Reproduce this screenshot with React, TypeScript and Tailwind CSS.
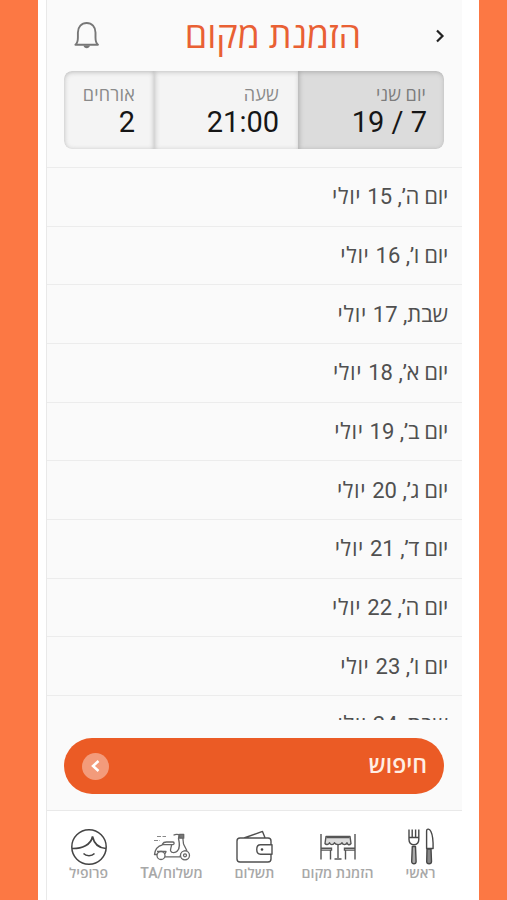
import type { ReactNode } from "react";

const days = [
  { weekday: "יום ה’,", date: " 15", month: " יולי" },
  { weekday: "יום ו’,", date: " 16", month: " יולי" },
  { weekday: "שבת,", date: " 17", month: " יולי" },
  { weekday: "יום א’,", date: " 18", month: " יולי" },
  { weekday: "יום ב’,", date: " 19", month: " יולי" },
  { weekday: "יום ג’,", date: " 20", month: " יולי" },
  { weekday: "יום ד’,", date: " 21", month: " יולי" },
  { weekday: "יום ה’,", date: " 22", month: " יולי" },
  { weekday: "יום ו’,", date: " 23", month: " יולי" },
  { weekday: "שבת,", date: " 24", month: " יולי" },
];

function Bell() {
  return (
    <svg width="28" height="30" viewBox="0 0 28 30" fill="none" stroke="#777" strokeWidth="1.9">
      <path d="M2.400 23.800c2-1.500 2.500-4 2.500-7.300V11.500C4.900 6 8.500 2 13.700 2s8.800 4 8.800 9.500v5c0 3.300.5 5.800 2.500 7.300z" strokeLinejoin="round" />
      <path d="M10.500 24.500c.5 3.600 5.900 3.600 6.400 0z" fill="#777" stroke="none" />
    </svg>
  );
}

function Cutlery() {
  return (
    <svg width="30" height="38" viewBox="0 0 30 38" fill="none" stroke="#484848" strokeWidth="1.4" strokeLinejoin="round">
      <path d="M3 1.500v10c0 3.200 1.500 5 4.900 5.300 3.400-.3 4.900-2.100 4.900-5.300v-10M6.200 1.500v7.500M9.600 1.500v7.500M3 9.500h9.800" />
      <path d="M6.300 18.500h3.200l.6 15c0 3-4.400 3-4.400 0z" fill="#aaa" />
      <path d="M20.600 20.500V3c.1-3 3-2 4.300.5 1.800 3.500 2.400 8 2.200 17z" />
      <path d="M21 21h4l.5 12.500c0 3-4.800 3-4.800 0z" fill="#888" />
    </svg>
  );
}

function DiningTable() {
  return (
    <svg width="36" height="26" viewBox="0 0 36 26" fill="none" stroke="#555" strokeWidth="1.4">
      <path d="M1 0v25.500M1 14.200h10.500v1.900H1M10.500 16v9.500M35 0v25.500M35 14.200H24.500v1.900H35M25.500 16v9.500M18 10v14M14.500 25h7" />
      <path d="M6 2.500h24l1 7c-1.500 2-3.500 1.500-4-.8-1 2.500-4.200 2.500-5 0-1 2.500-6.500 2.500-7.500 0-1 2.500-4.500 2.500-5 0-1 2.300-3.500 2.300-4.500.8z" fill="#dcdcdc" strokeLinejoin="round" />
      <path d="M6.500 3.500h23" strokeWidth="1.500" />
    </svg>
  );
}

function Wallet() {
  return (
    <svg width="38" height="34" viewBox="0 0 38 34" fill="none" stroke="#505050" strokeWidth="1.4" strokeLinejoin="round">
      <path d="M8 8 26.500 1.400 29 7.800M4 8h28q3 0 3 3v18q0 3-3 3H4q-3 0-3-3V11q0-3 3-3z" />
      <path d="M36 14.800H24.500c-5 0-5 9.400 0 9.400H36z" fill="white" />
      <circle cx="26" cy="19.500" r="1.300" fill="#444" stroke="none" />
    </svg>
  );
}

function Scooter() {
  return (
    <svg width="38" height="28" viewBox="0 0 38 28" fill="none" stroke="#666" strokeWidth="1.300" strokeLinejoin="round">
      <path d="M4 3.500h9M1 7.500h6" strokeWidth="1" strokeDasharray="4 1.500" stroke="#888" />
      <path d="M9.500 11c.7-1.500 2-2 4-2h6.500c1.500.2 1.500 2.300 0 2.600H9.500zM9.500 11.800C4.500 13 2 16.500 1.500 21.500h3M18.500 11.800c0 2.500-1.500 4-.8 6.200.9 2.200 4.800 2 6.600 0 3.200-3.500 2.200-8 1.200-12.500l.5-3.500h3.500l1 9 3.300 6.500c-4 .4-6 3-6.800 6.300H11.500" />
      <path d="M20.500 2.200c2-1.200 3.500-1.200 5.500-.5" />
      <path d="M26.500 1.300h4.200v3.900h-4.200z" fill="#777" />
      <path d="M4 18.500h9c-.2 1.500-1.500 2.500-2.500 2.500" />
      <circle cx="8" cy="22.500" r="4" fill="white" />
      <circle cx="32" cy="22.300" r="4.500" fill="white" />
      <circle cx="32" cy="22.300" r="1.500" />
    </svg>
  );
}

function Face() {
  return (
    <svg width="38" height="38" viewBox="0 0 38 38" fill="none" stroke="#444" strokeWidth="1.500">
      <circle cx="19" cy="19" r="17.200" />
      <path d="M2 20.500c10 .2 19-3.500 20.500-12 1.500 7 6 11.500 13.500 12" strokeWidth="1.700" />
      <path d="M13.500 25.500c2.800 3 8.200 3 11 0" />
    </svg>
  );
}

function Segment({ label, value, className, labelClass }: { label: string; value: string; className: string; labelClass: string }) {
  return (
    <div className={`flex flex-col items-end pt-[14px] ${className}`}>
      <span dir="rtl" className={`text-[18px] leading-5 ${labelClass}`}>{label}</span>
      <span dir="ltr" className="mt-[1px] text-[29px] leading-8 text-[#161616]">{value}</span>
    </div>
  );
}

function Tab({ label, children }: { label: string; children: ReactNode }) {
  return (
    <div className="flex w-[83px] flex-col items-center">
      <div className="flex h-[38px] items-center justify-center">{children}</div>
      <span dir="rtl" className="mt-[-2px] whitespace-nowrap text-[14px] font-semibold leading-[18px] text-[#a8a8a8]">{label}</span>
    </div>
  );
}

export default function App() {
  return (
    <div className="flex h-[900px] w-[507px] justify-center overflow-hidden bg-[#fc7844] pl-[10px] font-['Roboto','Open_Sans','Noto_Sans',sans-serif]">
      <div className="h-full w-[441px] bg-white pl-2 pr-[17px]">
        <div className="flex h-full w-[416px] flex-col border-l border-[#e9e9e9] bg-[#fafafa]">
          <header className="flex h-[71px] shrink-0 items-center pl-[26px] pr-[17px]">
            <Bell />
            <h1 dir="rtl" className="ml-auto mr-[74px] whitespace-nowrap text-[36px] font-[450] leading-[44px] tracking-[-0.1px] text-[#e96034]">הזמנת מקום</h1>
            <svg width="10" height="14" viewBox="0 0 10 14" fill="none" stroke="#222" strokeWidth="2.200"><path d="m2 1.500 5.500 5.500L2 12.500" /></svg>
          </header>
          <div className="ml-[17px] flex h-[78px] w-[380px] shrink-0 overflow-hidden rounded-lg">
            <Segment label="אורחים" value="2" labelClass="tracking-[0.2px] font-medium text-[#8a8a8a]" className="w-[90px] rounded-l-lg bg-[#f4f4f4] pr-[19px] shadow-[inset_0_1px_5px_#b8b8b8]" />
            <Segment label="שעה" value="21:00" labelClass="tracking-[0.2px] font-medium text-[#8a8a8a]" className="w-[144px] bg-[#f4f4f4] pr-[19px] shadow-[inset_1px_1px_5px_#c0c0c0]" />
            <Segment label="יום שני" value="19 / 7" labelClass="pr-px tracking-[0.1px] font-medium text-[#7c7c7c]" className="w-[146px] rounded-r-lg bg-[#dcdcdc] pr-[17px] shadow-[inset_1px_1px_5px_#a9a9a9]" />
          </div>
          <div className="mt-[18px] h-[553px] shrink-0 overflow-hidden border-t border-[#ececec]">
            {days.map(({ weekday, date, month }) => (
              <div key={weekday + date} className="flex h-[58.670px] items-center justify-end border-b border-[#ececec] pr-[14px]">
                <span dir="rtl" className="whitespace-nowrap text-[22px] font-[450] text-[#505050]">
                  <span className={weekday.length > 4 ? "tracking-[-0.3px]" : "tracking-[-0.1px]"}>{weekday}</span>
                  <span>{date}</span>
                  <span className="tracking-[0.6px]">{month}</span>
                </span>
              </div>
            ))}
          </div>
          <button className="ml-[17px] mt-[18px] flex h-14 w-[380px] shrink-0 items-center justify-between rounded-full bg-[#eb5b25] pl-[18px] pr-[17px]">
            <span className="flex size-[27px] items-center justify-center rounded-full bg-[#f39b7b]">
              <svg width="10" height="14" viewBox="0 0 10 14" fill="none" stroke="white" strokeWidth="2.500"><path d="M7.500 2 2 7l5.500 5" /></svg>
            </span>
            <span dir="rtl" className="text-[23px] font-semibold text-[#ffeee4]">חיפוש</span>
          </button>
          <nav className="mt-[16px] flex grow border-t border-[#e9e9e9] bg-white pt-[17px]">
            <Tab label="פרופיל"><Face /></Tab>
            <Tab label="משלוח/TA"><Scooter /></Tab>
            <Tab label="תשלום"><Wallet /></Tab>
            <Tab label="הזמנת מקום"><DiningTable /></Tab>
            <Tab label="ראשי"><Cutlery /></Tab>
          </nav>
        </div>
      </div>
    </div>
  );
}
